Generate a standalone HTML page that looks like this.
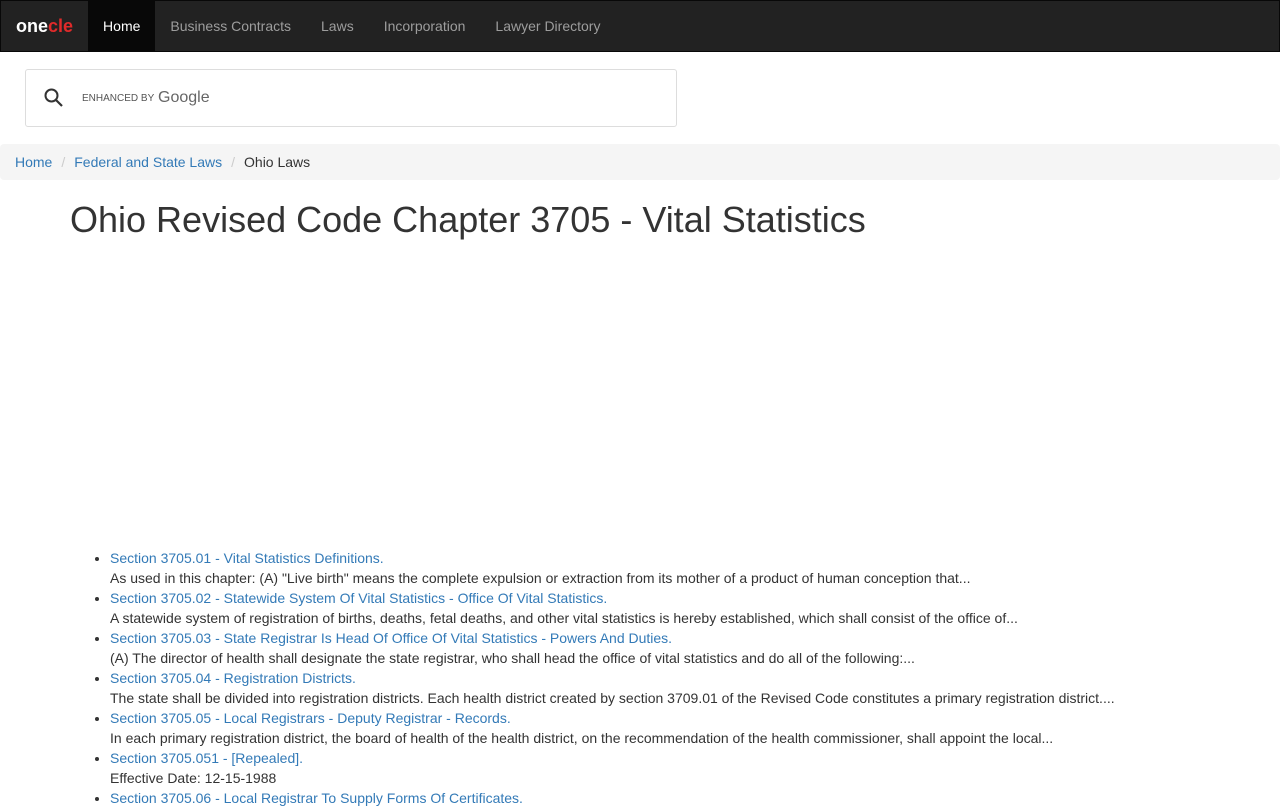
<!DOCTYPE html>
<html><head><meta charset="utf-8"><style>
*{box-sizing:border-box}
body{margin:0;font-family:"Liberation Sans",Arial,sans-serif;font-size:14px;color:#333;background:#fff;width:1280px;height:800px;overflow:hidden}
a{color:#337ab7;text-decoration:none}
.nav{height:52px;background:#222;border:1px solid #080808;display:flex;align-items:stretch}
.nav .brand{padding:0 15px 0 15px;font-weight:bold;font-size:18px;line-height:50px;color:#fff}
.nav .brand span{color:#e02a2a}
.nav a.item{color:#9d9d9d;padding:0 15px;line-height:50px;font-size:14px}
.nav a.item.active{background:#080808;color:#fff}
.search{position:absolute;left:25px;top:69px;width:652px;height:58px;border:1px solid #ddd;border-radius:3px;background:#fff}
.bc{position:absolute;left:0;top:144px;width:1280px;height:36px;background:#f5f5f5;border-radius:4px;padding:0 15px;line-height:36px;font-size:14px}
.bc .sep{color:#ccc;padding:0 9px}
h1{position:absolute;left:70px;top:198px;margin:0;font-weight:normal;font-size:36px;line-height:44px;color:#333}
ul{position:absolute;left:70px;top:548px;margin:0;padding-left:40px;line-height:20px}
li{margin:0}
</style></head><body>
<div class="nav"><div class="brand">one<span>cle</span></div><a class="item active" href="#">Home</a><a class="item" href="#">Business Contracts</a><a class="item" href="#">Laws</a><a class="item" href="#">Incorporation</a><a class="item" href="#">Lawyer Directory</a></div>
<div class="search">
<svg style="position:absolute;left:17px;top:17px" width="22" height="22" viewBox="0 0 22 22"><circle cx="8.5" cy="8.5" r="6" fill="none" stroke="#333" stroke-width="2"/><line x1="13" y1="13" x2="19" y2="19" stroke="#333" stroke-width="2.2"/></svg>
<span style="position:absolute;left:56px;top:23px;font-size:10px;color:#555;letter-spacing:0">ENHANCED BY</span>
<span style="position:absolute;left:132px;top:19px;font-size:16px;color:#666">Google</span>
</div>
<div class="bc"><a href="#">Home</a><span class="sep">/</span><a href="#">Federal and State Laws</a><span class="sep">/</span>Ohio Laws</div>
<h1>Ohio Revised Code Chapter 3705 - Vital Statistics</h1>
<ul>
<li><a href="#">Section 3705.01 - Vital Statistics Definitions.</a><br>As used in this chapter: (A) "Live birth" means the complete expulsion or extraction from its mother of a product of human conception that...</li>
<li><a href="#">Section 3705.02 - Statewide System Of Vital Statistics - Office Of Vital Statistics.</a><br>A statewide system of registration of births, deaths, fetal deaths, and other vital statistics is hereby established, which shall consist of the office of...</li>
<li><a href="#">Section 3705.03 - State Registrar Is Head Of Office Of Vital Statistics - Powers And Duties.</a><br>(A) The director of health shall designate the state registrar, who shall head the office of vital statistics and do all of the following:...</li>
<li><a href="#">Section 3705.04 - Registration Districts.</a><br>The state shall be divided into registration districts. Each health district created by section 3709.01 of the Revised Code constitutes a primary registration district....</li>
<li><a href="#">Section 3705.05 - Local Registrars - Deputy Registrar - Records.</a><br>In each primary registration district, the board of health of the health district, on the recommendation of the health commissioner, shall appoint the local...</li>
<li><a href="#">Section 3705.051 - [Repealed].</a><br>Effective Date: 12-15-1988</li>
<li><a href="#">Section 3705.06 - Local Registrar To Supply Forms Of Certificates.</a></li>
</ul>
</body></html>
